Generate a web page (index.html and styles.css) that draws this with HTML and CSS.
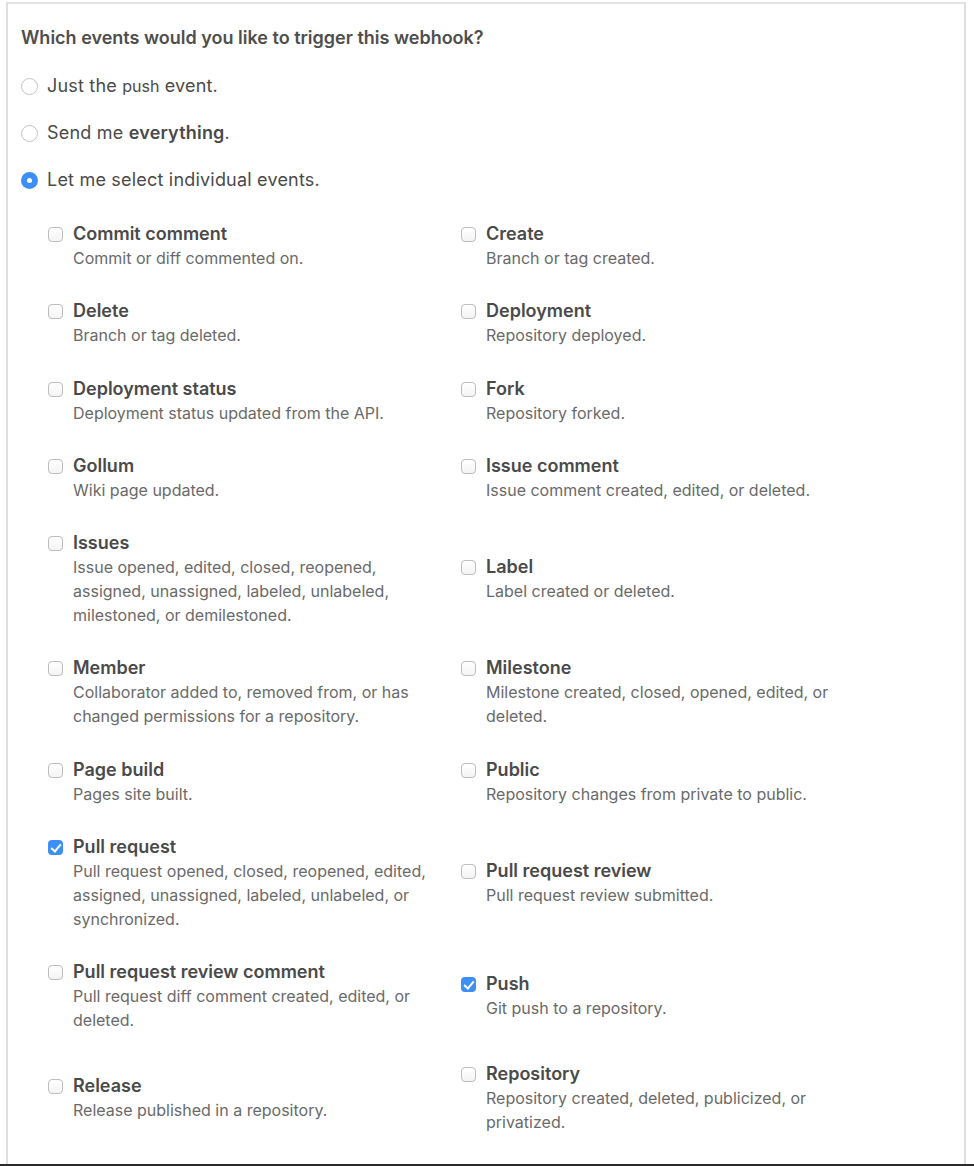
FILE: index.html
```html
<!DOCTYPE html>
<html>
<head>
<meta charset="utf-8">
<link rel="stylesheet" href="styles.css">
</head>
<body>
<div class="page">
  <div class="panel">
    <h3 class="heading">Which events would you like to trigger this webhook?</h3>
    <div class="radios">
      <label class="radio-row"><span class="radio"></span><span>Just the <code>push</code> event.</span></label>
      <label class="radio-row"><span class="radio"></span><span>Send me <strong>everything</strong>.</span></label>
      <label class="radio-row"><span class="radio checked"></span><span>Let me select individual events.</span></label>
    </div>
    <div class="events">
      <div class="event"><span class="cb"></span><div class="ev-text"><div class="ev-title">Commit comment</div><div class="ev-desc">Commit or diff commented on.</div></div></div>
      <div class="event"><span class="cb"></span><div class="ev-text"><div class="ev-title">Create</div><div class="ev-desc">Branch or tag created.</div></div></div>
      <div class="event"><span class="cb"></span><div class="ev-text"><div class="ev-title">Delete</div><div class="ev-desc">Branch or tag deleted.</div></div></div>
      <div class="event"><span class="cb"></span><div class="ev-text"><div class="ev-title">Deployment</div><div class="ev-desc">Repository deployed.</div></div></div>
      <div class="event"><span class="cb"></span><div class="ev-text"><div class="ev-title">Deployment status</div><div class="ev-desc">Deployment status updated from the API.</div></div></div>
      <div class="event"><span class="cb"></span><div class="ev-text"><div class="ev-title">Fork</div><div class="ev-desc">Repository forked.</div></div></div>
      <div class="event"><span class="cb"></span><div class="ev-text"><div class="ev-title">Gollum</div><div class="ev-desc">Wiki page updated.</div></div></div>
      <div class="event"><span class="cb"></span><div class="ev-text"><div class="ev-title">Issue comment</div><div class="ev-desc">Issue comment created, edited, or deleted.</div></div></div>
      <div class="event"><span class="cb"></span><div class="ev-text"><div class="ev-title">Issues</div><div class="ev-desc">Issue opened, edited, closed, reopened, assigned, unassigned, labeled, unlabeled, milestoned, or demilestoned.</div></div></div>
      <div class="event"><span class="cb"></span><div class="ev-text"><div class="ev-title">Label</div><div class="ev-desc">Label created or deleted.</div></div></div>
      <div class="event"><span class="cb"></span><div class="ev-text"><div class="ev-title">Member</div><div class="ev-desc">Collaborator added to, removed from, or has changed permissions for a repository.</div></div></div>
      <div class="event"><span class="cb"></span><div class="ev-text"><div class="ev-title">Milestone</div><div class="ev-desc">Milestone created, closed, opened, edited, or deleted.</div></div></div>
      <div class="event"><span class="cb"></span><div class="ev-text"><div class="ev-title">Page build</div><div class="ev-desc">Pages site built.</div></div></div>
      <div class="event"><span class="cb"></span><div class="ev-text"><div class="ev-title">Public</div><div class="ev-desc">Repository changes from private to public.</div></div></div>
      <div class="event"><span class="cb checked"></span><div class="ev-text"><div class="ev-title">Pull request</div><div class="ev-desc">Pull request opened, closed, reopened, edited, assigned, unassigned, labeled, unlabeled, or synchronized.</div></div></div>
      <div class="event"><span class="cb"></span><div class="ev-text"><div class="ev-title">Pull request review</div><div class="ev-desc">Pull request review submitted.</div></div></div>
      <div class="event"><span class="cb"></span><div class="ev-text"><div class="ev-title">Pull request review comment</div><div class="ev-desc">Pull request diff comment created, edited, or deleted.</div></div></div>
      <div class="event"><span class="cb checked"></span><div class="ev-text"><div class="ev-title">Push</div><div class="ev-desc">Git push to a repository.</div></div></div>
      <div class="event"><span class="cb"></span><div class="ev-text"><div class="ev-title">Release</div><div class="ev-desc">Release published in a repository.</div></div></div>
      <div class="event"><span class="cb"></span><div class="ev-text"><div class="ev-title">Repository</div><div class="ev-desc">Repository created, deleted, publicized, or privatized.</div></div></div>
    </div>
  </div>
</div>
</body>
</html>
```

FILE: styles.css
```css
* { box-sizing: border-box; }
html, body { margin: 0; padding: 0; background: #fff; }
body {
  font-family: Inter, "Liberation Sans", Arial, sans-serif;
  color: #4a4a4a;
}
.page {
  height: 1166px;
  overflow: hidden;
  border-bottom: 2px solid #2b2b2b;
  padding: 2px 8px 0 6px;
}
.panel {
  height: 100%;
  border-left: 2px solid #dedede;
  border-right: 2px solid #dedede;
  border-top: 2px solid #e3e3e3;
  padding: 22px 13px 0 13px;
}
.heading {
  margin: 0;
  font-size: 18px;
  line-height: 24px;
  font-weight: 600;
  color: #4e4e4e;
}
.radios {
  margin-top: 24px;
  display: flex;
  flex-direction: column;
  gap: 23px;
}
.radio-row {
  display: flex;
  align-items: center;
  gap: 9px;
  font-size: 18px;
  line-height: 24px;
  letter-spacing: 0.2px;
  color: #4a4a4a;
}
.radio-row code {
  font-family: Inter, "Liberation Sans", Arial, sans-serif;
  font-size: 16px;
  letter-spacing: 0;
}
.radio-row strong { font-weight: 600; }
.radio {
  width: 17px;
  height: 17px;
  border-radius: 50%;
  border: 1px solid #c4c4c4;
  background: #fff;
  flex: none;
}
.radio.checked {
  border: none;
  background: #3d8ff5;
  position: relative;
}
.radio.checked::after {
  content: "";
  position: absolute;
  left: 6px;
  top: 6px;
  width: 5px;
  height: 5px;
  border-radius: 50%;
  background: #fff;
}
.events {
  margin-top: 30px;
  padding-left: 27px;
  display: grid;
  grid-template-columns: 413px 413px;
  row-gap: 29.3px;
  align-items: center;
}
.event {
  display: flex;
  align-items: flex-start;
  gap: 10px;
}
.cb {
  flex: none;
  width: 15px;
  height: 15px;
  margin-top: 5px;
  border: 1px solid #bdbdbd;
  border-radius: 4px;
  background: linear-gradient(#fff, #f4f4f4);
  position: relative;
}
.cb.checked {
  border: none;
  background: #3d8ff5;
}
.cb.checked::after {
  content: "";
  position: absolute;
  left: 5px;
  top: 2px;
  width: 4px;
  height: 8px;
  border-right: 2px solid #fff;
  border-bottom: 2px solid #fff;
  transform: rotate(40deg);
}
.ev-text { width: 360px; }
.ev-title {
  font-size: 18px;
  line-height: 24px;
  font-weight: 600;
  color: #4a4a4a;
}
.ev-desc {
  font-size: 16px;
  line-height: 24px;
  color: #6a6a6a;
}
```
